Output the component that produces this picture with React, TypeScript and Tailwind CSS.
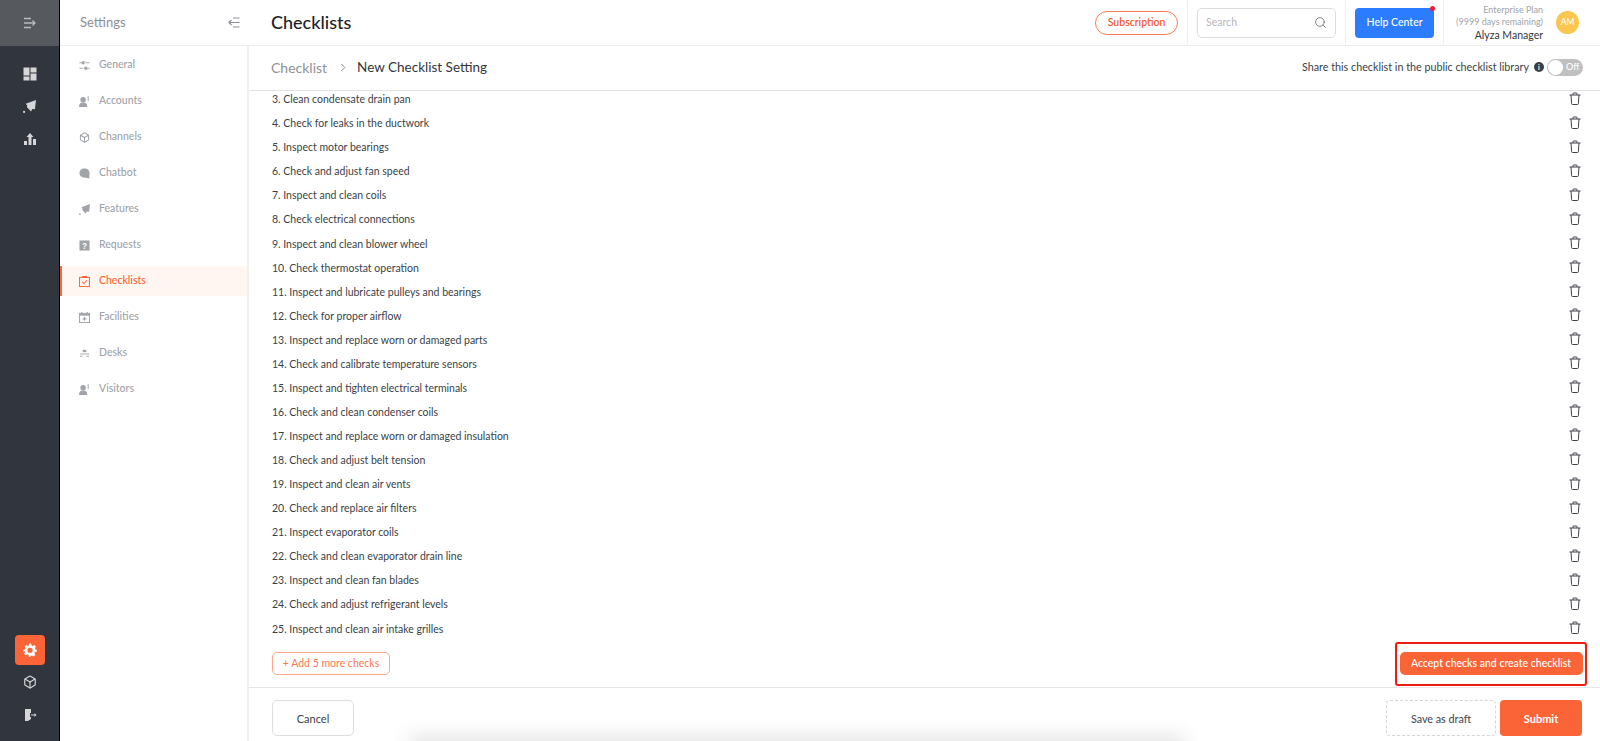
import React from "react";
import { Search, Box } from "lucide-react";

const checks = [
  "3. Clean condensate drain pan",
  "4. Check for leaks in the ductwork",
  "5. Inspect motor bearings",
  "6. Check and adjust fan speed",
  "7. Inspect and clean coils",
  "8. Check electrical connections",
  "9. Inspect and clean blower wheel",
  "10. Check thermostat operation",
  "11. Inspect and lubricate pulleys and bearings",
  "12. Check for proper airflow",
  "13. Inspect and replace worn or damaged parts",
  "14. Check and calibrate temperature sensors",
  "15. Inspect and tighten electrical terminals",
  "16. Check and clean condenser coils",
  "17. Inspect and replace worn or damaged insulation",
  "18. Check and adjust belt tension",
  "19. Inspect and clean air vents",
  "20. Check and replace air filters",
  "21. Inspect evaporator coils",
  "22. Check and clean evaporator drain line",
  "23. Inspect and clean fan blades",
  "24. Check and adjust refrigerant levels",
  "25. Inspect and clean air intake grilles",
];

const Rocket = ({ className = "" }: { className?: string }) => (
  <svg viewBox="0 0 12 12" className={className} fill="currentColor">
    <path d="M2.500 3.500 12 0l-1 8.500-2.500-.2L7.500 10.500 5 8 3.500 6.500 4 5z" />
    <rect x="0" y="10" width="2" height="2" rx="1" />
  </svg>
);
const People = ({ className = "" }: { className?: string }) => (
  <svg viewBox="0 0 12 12" className={className} fill="currentColor">
    <circle cx="4.500" cy="4" r="3" />
    <path d="M0 12c0-3.500 1.500-5 4.500-5s4.500 1.500 4.500 5z" />
    <path d="M9 1 10.500 0v5.500h-1V2z" />
  </svg>
);
const Cube = ({ className = "" }: { className?: string }) => <Box className={className} strokeWidth={2.200} />;
const Bubble = ({ className = "" }: { className?: string }) => (
  <svg viewBox="0 0 12 12" className={className} fill="currentColor">
    <path d="M6 .5c3.300 0 5.500 2.200 5.500 5 0 1.800-.4 3.500-.2 6C9.500 10.700 8 10.500 6 10.500 2.700 10.500.5 8.500.5 5.500.5 2.700 2.700.5 6 .5z" />
  </svg>
);
const Help = ({ className = "" }: { className?: string }) => (
  <svg viewBox="0 0 12 12" className={className}>
    <rect x="0.500" y="0.500" width="11" height="11" fill="currentColor" />
    <text x="6" y="9.500" fontSize="9" fontWeight="700" textAnchor="middle" fill="#fff" fontFamily="Liberation Sans, sans-serif">?</text>
  </svg>
);
const Clip = ({ className = "" }: { className?: string }) => (
  <svg viewBox="0 0 12 12" className={className} fill="none" stroke="currentColor" strokeWidth="1.100">
    <rect x="0.600" y="1.500" width="10.800" height="10" />
    <rect x="3.500" y="0" width="5" height="2.200" fill="currentColor" stroke="none" />
    <path d="m3.500 6.500 1.800 1.700 3.200-3.400" />
  </svg>
);
const Calendar = ({ className = "" }: { className?: string }) => (
  <svg viewBox="0 0 12 12" className={className} fill="none" stroke="currentColor" strokeWidth="1.100">
    <rect x="0.600" y="1.500" width="10.800" height="10" />
    <path d="M.6 3h10.800" strokeWidth="2" />
    <path d="M3 0V2M9 0V2M3.800 7.500h4.400M6 5.500v4" />
  </svg>
);
const Desk = ({ className = "" }: { className?: string }) => (
  <svg viewBox="0 0 12 12" className={className} fill="currentColor">
    <rect x="4" y="2" width="4" height="2.500" />
    <rect x="1" y="6" width="10" height="1" />
    <rect x="1" y="8.500" width="3" height="1" />
    <rect x="8" y="8.500" width="3" height="1" />
  </svg>
);
const Sliders = ({ className = "" }: { className?: string }) => (
  <svg viewBox="0 0 12 12" className={className} fill="none" stroke="currentColor" strokeWidth="1">
    <path d="M0.500 3h2M7 3h4.500M0.500 9h4M9.500 9h2" />
    <circle cx="4.500" cy="3" r="1.800" fill="currentColor" stroke="none" />
    <circle cx="7.500" cy="9" r="1.800" fill="currentColor" stroke="none" />
  </svg>
);

const nav = [
  ["General", Sliders],
  ["Accounts", People],
  ["Channels", Cube],
  ["Chatbot", Bubble],
  ["Features", Rocket],
  ["Requests", Help],
  ["Checklists", Clip],
  ["Facilities", Calendar],
  ["Desks", Desk],
  ["Visitors", People],
] as const;

function TrashIcon() {
  return (
    <svg viewBox="0 0 12 13" className="mb-[4px] h-[13px] w-[12px] text-[#3f434a]" fill="none" stroke="currentColor" strokeWidth="1">
      <path d="M0.500 3h11M4 3V1.500q0-.5.5-.5h3q.5 0 .5.5V3M2 3l.6 8.500q0 1 1 1h4.800q1 0 1-1L10 3" />
    </svg>
  );
}

export default function App() {
  return (
    <div className="flex h-[741px] w-[1600px] overflow-hidden bg-white font-['Lato',sans-serif] text-[#3a3f47]">
      <aside className="flex w-[60px] shrink-0 flex-col border-r border-black bg-[#31353d]">
        <div className="flex h-[46px] items-center justify-center bg-[#56595e] text-[#b9bbbe]">
          <svg viewBox="0 0 14 12" className="h-[12px] w-[14px]" fill="none" stroke="currentColor" strokeWidth="1.300">
            <path d="M1 1.500h7M1 6h11M1 10.500h7M9.500 3.500 12 6 9.500 8.500" />
          </svg>
        </div>
        <div className="mt-[21px] flex flex-col items-center gap-[19px] text-[#d5d6d8]">
          <svg viewBox="0 0 14 14" className="h-[14px] w-[14px]" fill="currentColor">
            <rect x="0.500" y="0.500" width="6" height="8" />
            <rect x="7.500" y="0.500" width="6" height="5" />
            <rect x="0.500" y="9.500" width="6" height="4" />
            <rect x="7.500" y="6.500" width="6" height="7" />
          </svg>
          <Rocket className="h-[13px] w-[13px]" />
          <svg viewBox="0 0 14 14" className="h-[14px] w-[14px]" fill="currentColor">
            <path d="M7 1 10.500 5H8.500v8h-3V5H3.500z" />
            <rect x="1" y="9" width="3" height="4" />
            <rect x="10" y="7" width="3" height="6" />
          </svg>
        </div>
        <div className="mt-auto mb-[19px] flex flex-col items-center text-[#d5d6d8]">
          <div className="flex h-[30px] w-[30px] items-center justify-center rounded-[4px] bg-[#fb6437] text-white">
            <svg viewBox="0 0 24 24" className="h-[14px] w-[14px]" fill="currentColor">
              <path fillRule="evenodd" d="M10 1h4l.6 3.200 2 .9L19.400 3.300l2.800 2.800-1.800 2.800.9 2L23.500 11.500v3.500l-3.200.6-.9 2 1.800 2.700-2.800 2.800-2.800-1.800-2 .8L13 23.500h-3l-.6-3.300-2-.8-2.800 1.800-2.800-2.800 1.800-2.700-.9-2L.5 15v-3.500l3.200-.6.9-2-1.800-2.800 2.800-2.800 2.800 1.800 2-.9zM12 8a4.500 4.500 0 1 0 0 9 4.500 4.500 0 0 0 0-9z" />
            </svg>
          </div>
          <Box className="mt-[10px] h-[14px] w-[14px]" strokeWidth={2} />
          <svg viewBox="0 0 14 14" className="mt-[19px] h-[14px] w-[14px]" fill="currentColor">
            <path d="M2 1h6v4H7v4h1v2L5 13H2z" />
            <path d="M8 6.500h3.500V5L13.500 7l-2 2V7.500H8z" />
          </svg>
        </div>
      </aside>

      <aside className="flex w-[189px] shrink-0 flex-col border-r-2 border-[#f0f0f0]">
        <div className="-mr-[2px] flex h-[46px] items-center justify-between border-b border-[#ececec] bg-white pl-[20px] pr-[9px] text-[#8b8e93]">
          <span className="text-[13px]">Settings</span>
          <svg viewBox="0 0 12 11" className="h-[11px] w-[12px]" fill="none" stroke="currentColor" strokeWidth="1.200">
            <path d="M5 1h6.500M1 5.500h10.500M5 10h6.500M3.500 3 1 5.500 3.500 8" />
          </svg>
        </div>
        <nav className="flex flex-col pt-[1px]">
          {nav.map(([label, Icon]) => {
            const active = label === "Checklists";
            return (
              <div
                key={label}
                className={
                  active
                    ? "my-[3px] flex h-[30px] items-center gap-[9px] border-l-2 border-[#fb6437] bg-[#fff5f1] pl-[17px] text-[10.500px] font-medium text-[#fb6437]"
                    : "flex h-[36px] items-center gap-[9px] pl-[19px] text-[10.500px] font-medium text-[#a0a3a8]"
                }
              >
                <Icon className="h-[11px] w-[11px] shrink-0" />
                <span>{label}</span>
              </div>
            );
          })}
        </nav>
      </aside>

      <main className="relative flex min-w-0 flex-1 flex-col">
        <header className="flex h-[46px] shrink-0 items-center border-b border-[#ececec] pl-[22px]">
          <h1 className="text-[18px] font-medium text-[#1f2226]">Checklists</h1>
          <div className="ml-auto flex h-full items-center">
            <button className="mr-[9px] flex h-[24px] w-[83px] items-center justify-center rounded-full border border-[#fb7a52] text-[10.500px] font-medium text-[#f4511e]">
              Subscription
            </button>
            <div className="flex h-full items-center border-l border-[#f0f0f0] px-[9px]">
              <div className="flex h-[30px] w-[139px] items-center justify-between rounded-[5px] border border-[#dcdcdc] pl-[8px] pr-[8px] text-[10.500px] text-[#b5b7ba]">
                <span>Search</span>
                <Search className="h-[13px] w-[13px] text-[#6b6f75]" strokeWidth={1.600} />
              </div>
            </div>
            <div className="flex h-full items-center border-l border-[#f0f0f0] px-[9px]">
              <button className="relative flex h-[30px] w-[79px] items-center justify-center rounded-[4px] bg-[#2b7cff] text-[10.500px] font-medium text-white">
                Help Center
                <span className="absolute right-[-1px] top-[-2px] h-[5px] w-[5px] rounded-full bg-[#f01e2c]" />
              </button>
            </div>
            <div className="flex h-full items-center border-l border-[#f0f0f0] pl-[12px] pr-[21px]">
              <div className="mr-[13px] flex flex-col items-end">
                <span className="text-[9px] leading-[12px] text-[#a0a3a8]">Enterprise Plan</span>
                <span className="text-[9px] leading-[12px] text-[#a0a3a8]">(9999 days remaining)</span>
                <span className="text-[10.500px] leading-[14px] text-[#33373d]">Alyza Manager</span>
              </div>
              <div className="flex h-[23px] w-[23px] items-center justify-center rounded-full bg-[#fbc64f] text-[8.500px] font-medium text-white">
                AM
              </div>
            </div>
          </div>
        </header>

        <div className="flex h-[45px] shrink-0 items-center border-b border-[#e2e2e2] pb-[2px] pl-[22px] pr-[17px]">
          <span className="text-[14px] text-[#8f9196]">Checklist</span>
          <svg viewBox="0 0 8 10" className="ml-[13px] h-[9px] w-[7px] text-[#74777c]" fill="none" stroke="currentColor" strokeWidth="1">
            <path d="m1.500 1 4 4-4 4" />
          </svg>
          <span className="ml-[10px] text-[13.500px] text-[#33373d]">New Checklist Setting</span>
          <div className="ml-auto flex items-center">
            <span className="text-[10.750px] text-[#3a3f47]">Share this checklist in the public checklist library</span>
            <span className="ml-[5px] flex h-[10px] w-[10px] items-center justify-center rounded-full bg-[#3a3f47] text-[7px] font-bold leading-none text-white">i</span>
            <div className="ml-[3px] flex h-[17px] w-[36px] items-center rounded-full bg-[#c0c0c0] pl-[1px]">
              <span className="h-[15px] w-[15px] rounded-full bg-white" />
              <span className="ml-[3px] text-[9px] font-medium text-white">Off</span>
            </div>
          </div>
        </div>

        <div className="flex min-h-0 flex-1 flex-col overflow-hidden">
          <ul className="-mt-[3px] flex flex-col pl-[23px] pr-[19px]">
            {checks.map((c) => (
              <li key={c} className="flex h-[24.070px] items-center justify-between text-[10.500px] text-[#3a3f47]">
                <span>{c}</span>
                <TrashIcon />
              </li>
            ))}
          </ul>
          <div className="mt-[11px] flex h-[23px] items-center justify-between pl-[23px] pr-[13px]">
            <button className="flex h-[23px] w-[118px] items-center justify-center rounded-[5px] border border-[#fda68c] text-[10.500px] text-[#fb7a52]">
              + Add 5 more checks
            </button>
            <div className="flex h-[44px] w-[192px] shrink-0 items-center justify-center rounded-[3px] border-2 border-[#ee1c0e]">
              <button className="flex h-[23px] w-[183px] items-center justify-center rounded-[5px] bg-[#fb6437] text-[10.500px] font-medium text-white">
                Accept checks and create checklist
              </button>
            </div>
          </div>
        </div>

        <footer className="flex h-[54px] shrink-0 items-start border-t border-[#e6e6e6] pl-[23px] pr-[18px] pt-[12px]">
          <button className="flex h-[36px] w-[82px] items-center justify-center rounded-[5px] border border-[#dedede] pt-[2px] text-[11px] text-[#3a3f47]">
            Cancel
          </button>
          <button className="ml-auto flex h-[36px] w-[110px] items-center justify-center rounded-[4px] border border-dashed border-[#d5d5d5] pt-[2px] text-[10.750px] font-medium text-[#4a4e55]">
            Save as draft
          </button>
          <button className="ml-[4px] flex h-[36px] w-[82px] items-center justify-center rounded-[4px] bg-[#fb6437] pt-[2px] text-[11px] font-bold text-white">
            Submit
          </button>
        </footer>
        <div className="pointer-events-none absolute bottom-[-20px] left-[165px] h-[20px] w-[765px] bg-[#e0e0e0] shadow-[0_0_20px_6px_rgba(0,0,0,0.1)]" />
      </main>
    </div>
  );
}
